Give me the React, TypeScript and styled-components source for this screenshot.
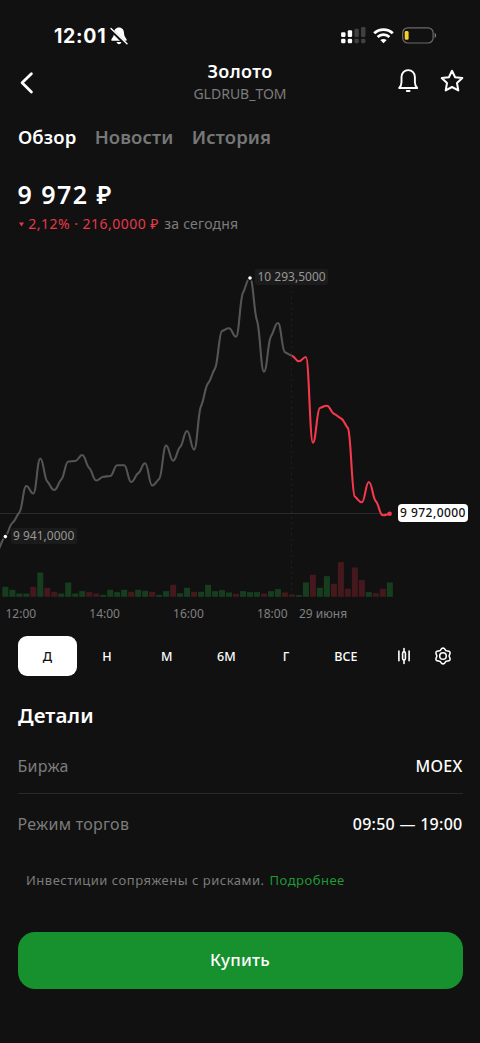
import React from "react";
import styled, { createGlobalStyle } from "styled-components";

const Global = createGlobalStyle`
  * { box-sizing: border-box; }
  html, body { margin: 0; padding: 0; background: #111111; }
  body { font-family: "Noto Sans", "Open Sans", sans-serif; color: #ffffff; }
`;

const Screen = styled.main`
  width: 480px;
  height: 1043px;
  background: #111111;
  overflow: hidden;
  display: flex;
  flex-direction: column;
`;

const StatusBar = styled.div`
  height: 56px;
  padding: 15px 43.5px 0 54px;
  display: flex;
  align-items: center;
  justify-content: space-between;
`;

const StatusGroup = styled.div<{ $gap: number }>`
  display: flex;
  align-items: center;
  gap: ${(p) => p.$gap}px;
`;

const Clock = styled.span`
  font-family: Inter, sans-serif;
  font-size: 19.5px;
  font-weight: 700;
  line-height: 24px;
  letter-spacing: 0.7px;
`;

const Header = styled.header`
  height: 54px;
  padding: 0 16px;
  display: grid;
  grid-template-columns: 68px 1fr 68px;
  align-items: start;
`;

const IconButton = styled.button`
  padding: 0;
  border: 0;
  background: none;
  color: #ffffff;
  display: flex;
  align-items: center;
  justify-content: center;
`;

const BackButton = styled(IconButton)`
  width: 18px;
  margin: 15px 0 0 2px;
`;

const HeaderActions = styled.div`
  display: flex;
  justify-content: flex-end;
  gap: 20px;
  padding-top: 13px;
`;

const Titles = styled.div`
  padding-top: 4px;
  text-align: center;
`;

const Title = styled.h1`
  margin: 0;
  font-size: 18px;
  line-height: 22px;
  font-weight: 600;
  letter-spacing: 0.35px;
`;

const Ticker = styled.div`
  font-size: 14px;
  line-height: 23px;
  color: #7c7c7c;
`;

const Tabs = styled.nav`
  height: 53px;
  padding-left: 18px;
  display: flex;
  align-items: center;
  gap: 18.3px;
`;

const Tab = styled.span<{ $active?: boolean }>`
  font-size: 18.5px;
  line-height: 26px;
  font-weight: 600;
  letter-spacing: 0.1px;
  color: ${(p) => (p.$active ? "#ffffff" : "#777777")};
`;

const Price = styled.div`
  margin: 15px 0 4px 17.5px;
  font-size: 25px;
  line-height: 32px;
  font-weight: 600;
  letter-spacing: 1.45px;
`;

const Change = styled.div`
  height: 20px;
  padding-left: 19px;
  display: flex;
  align-items: center;
  gap: 4.3px;
  font-size: 14px;
  line-height: 20px;
`;

const ChangeValue = styled.span`
  color: #e6394a;
  letter-spacing: 0.48px;
`;

const ChangePeriod = styled.span`
  color: #7c7c7c;
  margin-left: 1px;
  letter-spacing: 0.2px;
`;

const ChartArea = styled.section`
  position: relative;
  height: 340px;
  margin-top: 26px;
`;

const ChartSvg = styled.svg`
  display: block;
`;

const PointLabel = styled.span<{ $x: number; $y: number }>`
  position: absolute;
  left: ${(p) => p.$x}px;
  top: ${(p) => p.$y}px;
  height: 16px;
  padding: 0 2.5px;
  border-radius: 2px;
  background: #1b1b1b;
  color: #979797;
  font-size: 12px;
  line-height: 16px;
  white-space: nowrap;
`;

const PriceTag = styled.span`
  position: absolute;
  left: 398px;
  top: 244px;
  width: 70px;
  height: 18px;
  border-radius: 4px;
  background: #ffffff;
  color: #111111;
  font-size: 12px;
  font-weight: 500;
  line-height: 18px;
  letter-spacing: 0.45px;
  text-align: center;
  white-space: nowrap;
`;

const Axis = styled.div`
  height: 27px;
  padding-left: 5.5px;
  display: grid;
  grid-template-columns: 83.8px 83.8px 83.8px 42px auto;
  align-items: center;
  font-size: 12px;
  line-height: 16px;
  color: #808080;
`;

const RangeBar = styled.div`
  height: 40px;
  margin: 9px 17.5px 0;
  display: flex;
  align-items: center;
`;

const Range = styled.button<{ $active?: boolean }>`
  width: 59.7px;
  height: 39.5px;
  padding: 0;
  border: 0;
  border-radius: 9px;
  background: ${(p) => (p.$active ? "#ffffff" : "transparent")};
  color: ${(p) => (p.$active ? "#111111" : "#ffffff")};
  font-family: inherit;
  font-size: 12.5px;
  font-weight: 500;
`;

const ChartTools = styled.div`
  flex: 1;
  display: flex;
  align-items: center;
  justify-content: flex-end;
  gap: 23px;
  padding-right: 10.5px;
`;

const SectionTitle = styled.h2`
  margin: 24.5px 0 9px 18px;
  font-size: 20.5px;
  line-height: 28px;
  font-weight: 600;
  letter-spacing: 0.15px;
`;

const DetailRow = styled.div<{ $divided?: boolean }>`
  height: ${(p) => (p.$divided ? 56.5 : 58)}px;
  margin: 0 17.5px;
  padding-top: 1px;
  display: flex;
  align-items: center;
  justify-content: space-between;
  border-bottom: ${(p) => (p.$divided ? "1px solid #292929" : "0")};
  font-size: 16px;
  line-height: 24px;
  letter-spacing: 0.27px;
`;

const DetailName = styled.span`
  color: #7c7c7c;
`;

const DetailValue = styled.span`
  font-weight: 500;
`;

const RiskNote = styled.p`
  height: 55px;
  margin: 0;
  padding-left: 26px;
  display: flex;
  align-items: center;
  gap: 5px;
  font-size: 13px;
  color: #7c7c7c;
  letter-spacing: 0.5px;
`;

const MoreLink = styled.a`
  color: #1f9a35;
`;

const BuyButton = styled.button`
  height: 56.5px;
  margin: 25px 17.5px 0;
  padding: 0 0 2px;
  border: 0;
  border-radius: 17px;
  background: #17912d;
  color: #ffffff;
  font-family: inherit;
  font-size: 17px;
  font-weight: 500;
  letter-spacing: 0.2px;
`;

type Point = [number, number];

const STEP = 6.99;
const START = 5.35;
const xAt = (i: number) => START + i * STEP;

const levels = [
  536.5, 523, 512.5, 486, 493.5, 458.5, 481.5, 490, 479.5, 461.5, 461, 455, 468,
  480.5, 476.7, 476, 465.3, 465.3, 482, 473.3, 463.3, 485.5, 479, 445.5, 460.7,
  447, 431, 449.5, 406, 383.3, 368.3, 331, 328.3, 336.7, 292.7, 278, 320.7,
  371.7, 336.3, 323, 352.3, 355.7, 361.3, 357, 442.7, 408, 405.7, 413.7, 418.3,
  428, 496.7, 502.3, 482, 501.3, 515.3, 513.7,
].map((y) => y - 260);

const SESSION_START = 41;

const volumes =
  "g10 g7 g3.3 g3.3 r10 g24.3 r9 r5 g3.3 g14.3 g3.3 g5.7 r4.7 r3.3 g2 g7 g4.7 g7 r5 g7 g6 r5 g2 g5.7 r12 g3.5 g9 r5 g5 g12 g5.7 g6.7 g4.3 r3 g5.7 g4.7 g4.7 r3.3 g5.7 g7.7 r4.3 r2.3 g1.7 g14.3 r22 g9 g20.7 r13 r34.7 r8 r29.3 r16.7 g4.7 r3.5 r8 g14.3"
    .split(" ")
    .map((v) => ({ up: v[0] === "g", height: Number(v.slice(1)) }));

/* Softened monotone interpolation: no overshoot, with a slight ease at every point. */
const EASE = 0.4;
const REACH = 0.45;

function tangents(pts: Point[]): number[] {
  const slopes = pts.slice(1).map((p, i) => (p[1] - pts[i][1]) / (p[0] - pts[i][0]));
  return pts.map((_, i) => {
    if (i === 0) return slopes[0];
    if (i === pts.length - 1) return slopes[slopes.length - 1];
    const a = slopes[i - 1];
    const b = slopes[i];
    if (a * b <= 0) return 0;
    return Math.sign(a) * Math.min(Math.abs(a), Math.abs(b), Math.abs(a + b) / 4) * 2 * EASE;
  });
}

function curve(pts: Point[], from: number, to: number): string {
  const m = tangents(pts);
  let d = `M${pts[from][0]},${pts[from][1]}`;
  for (let i = from; i < to; i++) {
    const [x0, y0] = pts[i];
    const [x1, y1] = pts[i + 1];
    const h = (x1 - x0) * REACH;
    d += `C${x0 + h},${y0 + m[i] * h} ${x1 - h},${y1 - m[i + 1] * h} ${x1},${y1}`;
  }
  return d;
}

const points: Point[] = [
  [START - STEP, 290],
  ...levels.map((y, i): Point => [xAt(i), y]),
];

const last = points.length - 1;

function Chart() {
  return (
    <ChartArea>
      <ChartSvg width="480" height="340" viewBox="0 0 480 340" fill="none">
        <line x1="0" x2="389" y1="253.5" y2="253.5" stroke="#2a2a2a" />
        <line x1="291.5" x2="291.5" y1="26" y2="337" stroke="#252525" strokeDasharray="1.5 4" />
        {volumes.map((v, i) => (
          <rect
            key={i}
            x={xAt(i) - 3}
            y={336.8 - v.height}
            width="6"
            height={v.height}
            fill={v.up ? "#163e1e" : "#45181d"}
          />
        ))}
        <path d={curve(points, 0, SESSION_START + 1)} stroke="#555555" strokeWidth="2.1" />
        <path d={curve(points, SESSION_START + 1, last)} stroke="#f5384b" strokeWidth="2.1" />
        <circle cx="389.6" cy="253.8" r="2.3" fill="#f5384b" />
        <circle cx={xAt(0)} cy="276.6" r="2.8" fill="#111111" />
        <circle cx={xAt(0)} cy="276.6" r="1.8" fill="#ffffff" />
        <circle cx={xAt(35)} cy="18" r="2.8" fill="#111111" />
        <circle cx={xAt(35)} cy="18" r="1.8" fill="#ffffff" />
      </ChartSvg>
      <PointLabel $x={255} $y={9}>10 293,5000</PointLabel>
      <PointLabel $x={10.5} $y={268}>9 941,0000</PointLabel>
      <PriceTag>9 972,0000</PriceTag>
    </ChartArea>
  );
}

function MutedBellIcon() {
  return (
    <svg width="18" height="18" viewBox="0 0 18 18">
      <path
        d="M9 .6C5.9.6 4.1 2.9 4 5.8 3.9 9.2 3.1 10 1.6 11.9.9 12.9 1.3 13.8 2.4 13.8H15.6C16.7 13.8 17.1 12.9 16.4 11.9 14.9 10 14.1 9.2 14 5.8 13.9 2.9 12.1.6 9 .6Z"
        fill="#fff"
      />
      <path d="M6.6 15H11.4C11.2 16.4 10.2 17.2 9 17.2S6.8 16.4 6.6 15Z" fill="#fff" />
      <path d="M.6 2.4 16.4 18" stroke="#111" strokeWidth="3.2" />
      <path d="M1 1.4 17 16.8" stroke="#fff" strokeWidth="1.4" strokeLinecap="round" />
    </svg>
  );
}

function SignalIcon() {
  const tops = [5.3, 3.3, 1.7, 0];
  return (
    <svg width="25" height="17" viewBox="0 0 25 17">
      {tops.map((top, i) => (
        <g key={i} fill={i < 2 ? "#fff" : "#404040"}>
          <rect x={0.1 + i * 6.65} y={top} width="4.4" height={9.9 - top} rx="1.2" />
          <rect x={0.1 + i * 6.65} y="11.7" width="4.4" height="4.6" rx="1.4" />
        </g>
      ))}
    </svg>
  );
}

function WifiIcon() {
  return (
    <svg width="21" height="16" viewBox="0 0 21 16" fill="none" stroke="#fff" strokeWidth="2.7">
      <path d="M1.2 5.3C6.3.3 14.7.3 19.8 5.3" />
      <path d="M4.6 9C7.9 5.9 13.1 5.9 16.4 9" />
      <path d="M10.5 15.3 7.3 12.1C9.1 10.5 11.9 10.5 13.7 12.1Z" fill="#fff" stroke="none" />
    </svg>
  );
}

function BatteryIcon() {
  return (
    <svg width="35" height="17" viewBox="0 0 35 17">
      <rect x=".7" y=".8" width="30.4" height="15.2" rx="5" fill="none" stroke="#6b6b6b" strokeWidth="1.2" />
      <path d="M32.6 5.8C34.6 6.6 34.6 10.2 32.6 11Z" fill="#7a7a7a" />
      <rect x="2.7" y="4" width="3.9" height="8.8" rx="1.4" fill="#f7d02c" />
    </svg>
  );
}

function BackIcon() {
  return (
    <svg width="18" height="24" viewBox="0 0 18 24" fill="none" stroke="#fff" strokeWidth="2.8" strokeLinecap="round" strokeLinejoin="round">
      <path d="M13.4 2.7 4.1 11.8 13.4 20.9" />
    </svg>
  );
}

function BellIcon() {
  return (
    <svg width="24" height="24" viewBox="0 0 24 24" fill="none" stroke="#fff" strokeWidth="1.9" strokeLinejoin="round">
      <path d="M3.2 19C4.9 17.3 5.5 15.9 5.5 13.3V8C5.5 4 8.3 1.1 12.2 1.1S18.9 4 18.9 8V13.3C18.9 15.9 19.5 17.3 21.2 19Z" />
      <rect x="9.9" y="21.1" width="4.6" height="2" rx="1" fill="#fff" stroke="none" />
    </svg>
  );
}

function StarIcon() {
  return (
    <svg width="24" height="24" viewBox="0 0 24 24" fill="none" stroke="#fff" strokeWidth="2" strokeLinejoin="round">
      <path d="M12 1.8 15.1 8.2 22.3 9.1 17 14.1 18.3 21.4 12 18 5.7 21.4 7 14.1 1.7 9.1 8.9 8.2Z" />
    </svg>
  );
}

function CandlesIcon() {
  return (
    <svg width="14" height="18" viewBox="0 0 14 18" fill="none" stroke="#fff" strokeWidth="1.6" strokeLinecap="round">
      <path d="M1.9 4V13.8M12.1 4V13.8M7 1.5V5M7 13V16.5" />
      <rect x="5.6" y="4.8" width="2.8" height="8.2" rx="1.4" />
    </svg>
  );
}

const gearOutline =
  Array.from({ length: 72 }, (_, i) => {
    const a = (i * Math.PI) / 36;
    const r = 7.05 + 0.9 * Math.cos(6 * a);
    return `${i ? "L" : "M"}${(9 + r * Math.sin(a)).toFixed(2)} ${(9 - r * Math.cos(a)).toFixed(2)}`;
  }).join("") + "Z";

function GearIcon() {
  return (
    <svg width="18" height="18" viewBox="0 0 18 18" fill="none" stroke="#fff" strokeWidth="1.5" strokeLinejoin="round">
      <path d={gearOutline} />
      <circle cx="9" cy="9" r="3.3" />
    </svg>
  );
}

const ranges = ["Д", "Н", "М", "6М", "Г", "ВСЕ"];
const ticks = ["12:00", "14:00", "16:00", "18:00", "29 июня"];

export default function App() {
  return (
    <Screen>
      <Global />
      <StatusBar>
        <StatusGroup $gap={4}>
          <Clock>12:01</Clock>
          <MutedBellIcon />
        </StatusGroup>
        <StatusGroup $gap={7.5}>
          <SignalIcon />
          <WifiIcon />
          <BatteryIcon />
        </StatusGroup>
      </StatusBar>
      <Header>
        <BackButton aria-label="Назад">
          <BackIcon />
        </BackButton>
        <Titles>
          <Title>Золото</Title>
          <Ticker>GLDRUB_TOM</Ticker>
        </Titles>
        <HeaderActions>
          <IconButton aria-label="Уведомления">
            <BellIcon />
          </IconButton>
          <IconButton aria-label="Избранное">
            <StarIcon />
          </IconButton>
        </HeaderActions>
      </Header>
      <Tabs>
        <Tab $active>Обзор</Tab>
        <Tab>Новости</Tab>
        <Tab>История</Tab>
      </Tabs>
      <Price>9 972 ₽</Price>
      <Change>
        <svg width="5" height="5" viewBox="0 0 5 5">
          <path d="M0 .6H5L2.5 4.6Z" fill="#e6394a" />
        </svg>
        <ChangeValue>2,12% · 216,0000 ₽</ChangeValue>
        <ChangePeriod>за сегодня</ChangePeriod>
      </Change>
      <Chart />
      <Axis>
        {ticks.map((t) => (
          <span key={t}>{t}</span>
        ))}
      </Axis>
      <RangeBar>
        {ranges.map((r, i) => (
          <Range key={r} $active={i === 0}>
            {r}
          </Range>
        ))}
        <ChartTools>
          <IconButton aria-label="Свечи">
            <CandlesIcon />
          </IconButton>
          <IconButton aria-label="Настройки">
            <GearIcon />
          </IconButton>
        </ChartTools>
      </RangeBar>
      <SectionTitle>Детали</SectionTitle>
      <DetailRow $divided>
        <DetailName>Биржа</DetailName>
        <DetailValue>MOEX</DetailValue>
      </DetailRow>
      <DetailRow>
        <DetailName>Режим торгов</DetailName>
        <DetailValue>09:50 — 19:00</DetailValue>
      </DetailRow>
      <RiskNote>
        Инвестиции сопряжены с рисками.
        <MoreLink>Подробнее</MoreLink>
      </RiskNote>
      <BuyButton>Купить</BuyButton>
    </Screen>
  );
}
